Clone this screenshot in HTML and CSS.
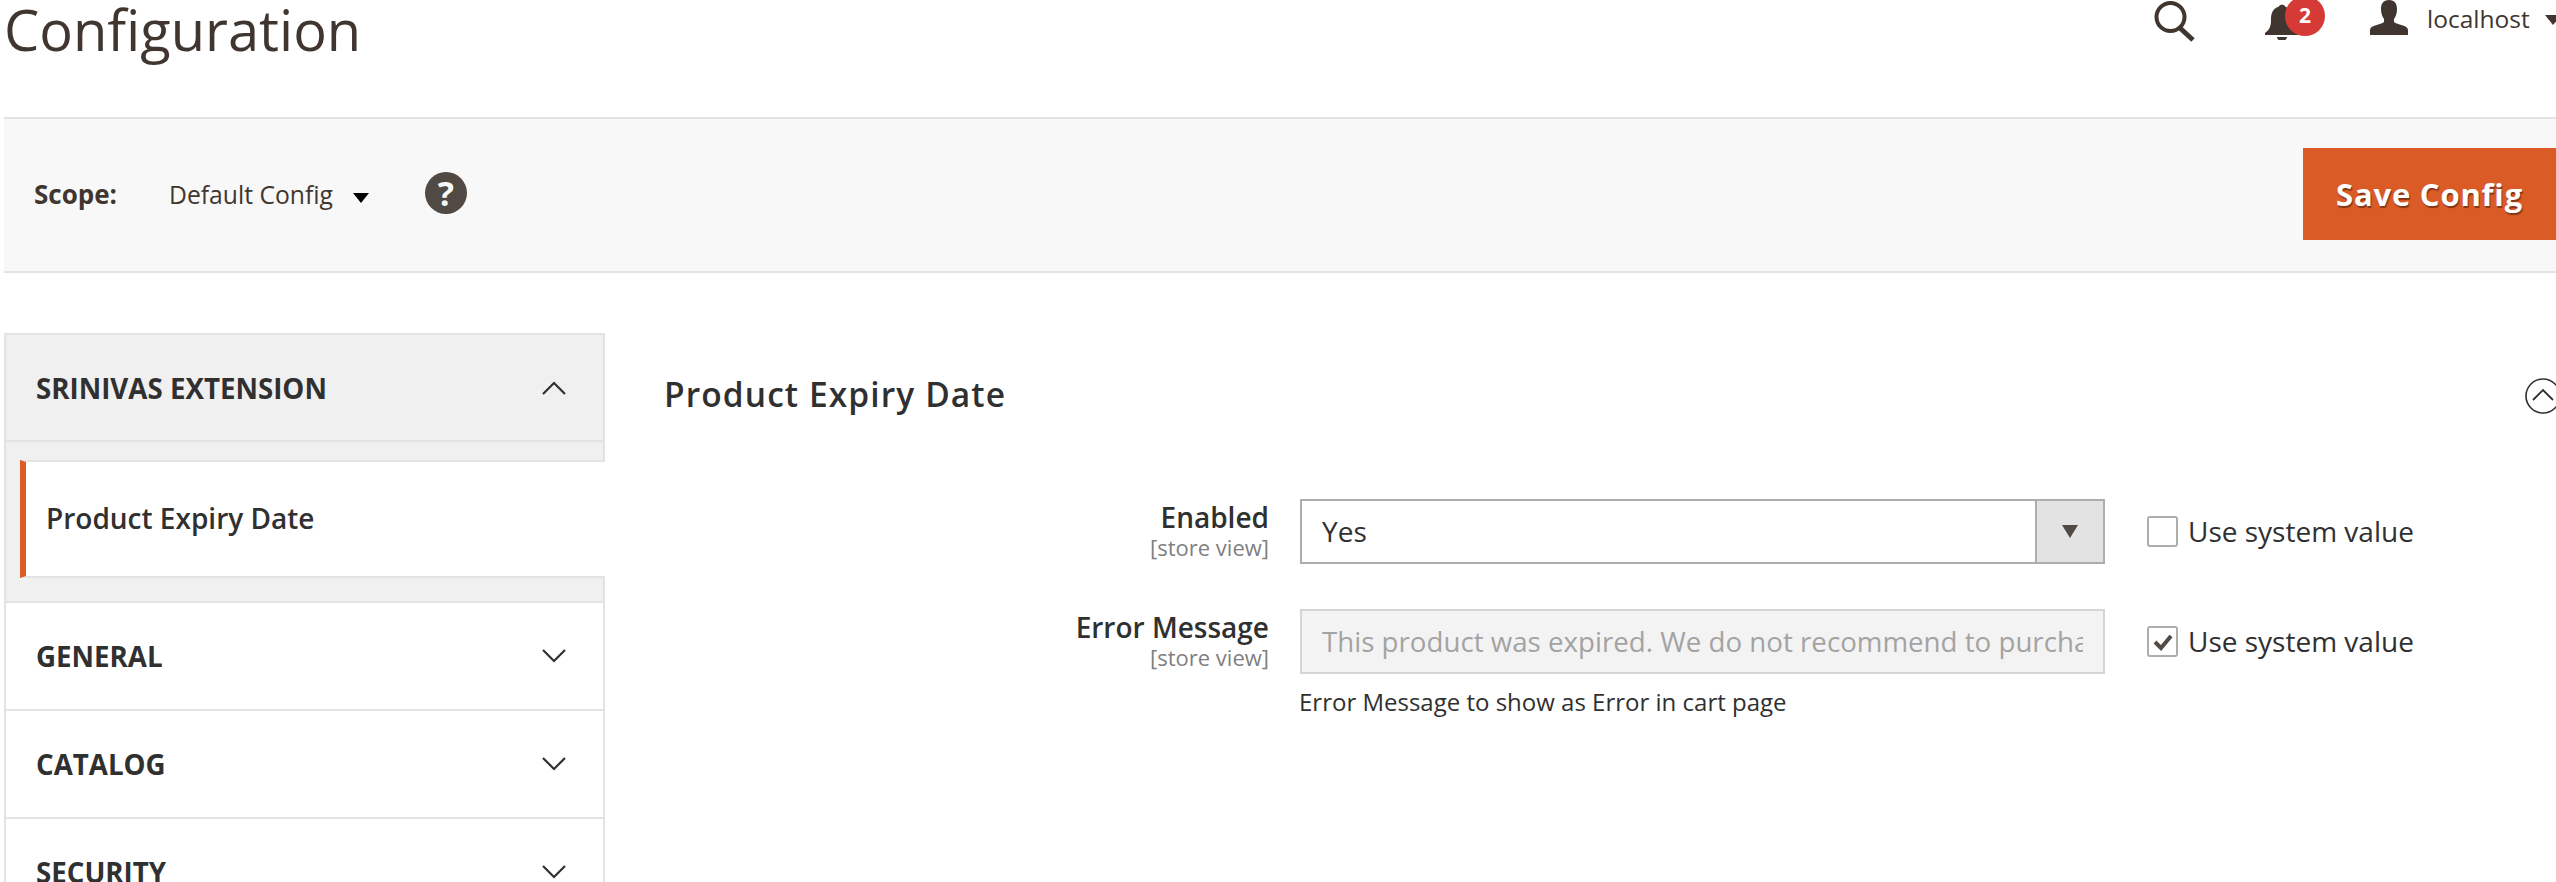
FILE: index.html
```html
<!DOCTYPE html>
<html lang="en">
<head>
<meta charset="utf-8">
<title>Configuration</title>
<link rel="stylesheet" href="styles.css">
</head>
<body>
<header class="page-header">
  <h1 class="page-title">Configuration</h1>
  <div class="actions">
    <svg class="icon-search" viewBox="0 0 42 42"><circle cx="17.5" cy="17" r="14" fill="none" stroke="#41362f" stroke-width="4"/><path d="M27 28 L40 40" fill="none" stroke="#41362f" stroke-width="5"/></svg>
    <div class="notify">
      <svg class="icon-bell" viewBox="0 0 36 36"><path fill="#41362f" d="M15 2.5 C15 0 21 0 21 2.5 C28 5 29 10 29 16 C29 23 31 26 35 29 L35 31 L1 31 L1 29 C5 26 7 23 7 16 C7 10 8 5 15 2.5 Z M13 33 L23 33 C23 38 13 38 13 33 Z"/></svg>
      <span class="badge">2</span>
    </div>
    <svg class="icon-user" viewBox="0 0 38 35"><path fill="#41362f" d="M19 0 C25 0 27 4 27 9 C27 13 26 16 24 19 L24 22 C27 25 38 25 38 30 L38 35 L0 35 L0 30 C0 25 11 25 14 22 L14 19 C12 16 11 13 11 9 C11 4 13 0 19 0 Z"/></svg>
    <span class="user-name">localhost</span>
    <span class="user-caret"></span>
  </div>
</header>

<section class="scope-bar">
  <span class="scope-label">Scope:</span>
  <span class="scope-value">Default Config</span>
  <span class="scope-caret"></span>
  <span class="help">?</span>
  <button class="save">Save Config</button>
</section>

<main class="layout">
  <nav class="sidebar">
    <div class="nav-head open">
      <span>SRINIVAS EXTENSION</span>
      <svg class="chev" viewBox="0 0 24 14"><path d="M1 13 L12 2 L23 13" fill="none" stroke="#303030" stroke-width="2.2"/></svg>
    </div>
    <div class="nav-sub">
      <div class="nav-item">Product Expiry Date</div>
    </div>
    <div class="nav-head">
      <span>GENERAL</span>
      <svg class="chev" viewBox="0 0 24 14"><path d="M1 1 L12 12 L23 1" fill="none" stroke="#303030" stroke-width="2.2"/></svg>
    </div>
    <div class="nav-head">
      <span>CATALOG</span>
      <svg class="chev" viewBox="0 0 24 14"><path d="M1 1 L12 12 L23 1" fill="none" stroke="#303030" stroke-width="2.2"/></svg>
    </div>
    <div class="nav-head">
      <span>SECURITY</span>
      <svg class="chev" viewBox="0 0 24 14"><path d="M1 1 L12 12 L23 1" fill="none" stroke="#303030" stroke-width="2.2"/></svg>
    </div>
  </nav>

  <div class="content">
    <div class="section-head">
      <h2 class="section-title">Product Expiry Date</h2>
      <svg class="collapse" viewBox="0 0 36 36"><circle cx="18" cy="18" r="17" fill="none" stroke="#303030" stroke-width="1.6"/><path d="M8 22 L18 12 L28 22" fill="none" stroke="#303030" stroke-width="1.8"/></svg>
    </div>
    <div class="form">
      <div class="label"><div class="label-main">Enabled</div><div class="label-scope">[store view]</div></div>
      <div class="control">
        <div class="select"><span class="select-text">Yes</span><span class="select-btn"><i class="select-arrow"></i></span></div>
      </div>
      <label class="system"><span class="check"></span><span class="system-text">Use system value</span></label>

      <div class="label"><div class="label-main">Error Message</div><div class="label-scope">[store view]</div></div>
      <div class="control">
        <div class="input"><span class="input-text">This product was expired. We do not recommend to purchase</span></div>
        <div class="note">Error Message to show as Error in cart page</div>
      </div>
      <label class="system"><span class="check"><svg viewBox="0 0 20 18"><path d="M2 9 L8 15 L18 3" fill="none" stroke="#514943" stroke-width="4"/></svg></span><span class="system-text">Use system value</span></label>
    </div>
  </div>
</main>
</body>
</html>
```

FILE: styles.css
```css
html, body {
  margin: 0;
  height: 882px;
  overflow: hidden;
  background: #fff;
}
body {
  font-family: "Open Sans", sans-serif;
  color: #303030;
}
.page-header {
  height: 117px;
  display: flex;
  justify-content: space-between;
  align-items: flex-start;
  box-sizing: border-box;
}
.page-title {
  margin: 0 0 0 4px;
  font-size: 56px;
  font-weight: 400;
  line-height: 59px;
  color: #41362f;
}
.actions {
  display: flex;
  align-items: flex-start;
  overflow: hidden;
  height: 60px;
  width: 403px;
  flex: none;
}
.icon-search {
  width: 42px;
  height: 42px;
  flex: none;
}
.notify {
  position: relative;
  width: 36px;
  height: 40px;
  margin-left: 69px;
  flex: none;
}
.icon-bell {
  width: 36px;
  height: 36px;
  margin-top: 4px;
  display: block;
}
.badge {
  position: absolute;
  left: 21px;
  top: -4px;
  width: 40px;
  height: 40px;
  border-radius: 50%;
  background: #d63a36;
  color: #fff;
  font-size: 21px;
  font-weight: 700;
  line-height: 38px;
  text-align: center;
}
.icon-user {
  width: 38px;
  height: 35px;
  margin-left: 70px;
  flex: none;
}
.user-name {
  margin-left: 19px;
  font-size: 24.5px;
  line-height: 38px;
  color: #41362f;
}
.user-caret, .scope-caret {
  width: 0;
  height: 0;
  border-style: solid;
  border-color: #000 transparent transparent;
  flex: none;
}
.user-caret {
  border-width: 10px 8px 0;
  border-top-color: #41362f;
  margin: 15px 0 0 15px;
}
.scope-bar {
  margin-left: 4px;
  height: 156px;
  box-sizing: border-box;
  border-top: 2px solid #e3e3e3;
  border-bottom: 2px solid #e3e3e3;
  background: #f8f8f8;
  display: flex;
  align-items: center;
}
.scope-label {
  margin-left: 30px;
  padding-bottom: 2px;
  font-size: 26px;
  font-weight: 700;
  color: #41362f;
}
.scope-value {
  margin-left: 52px;
  padding-bottom: 2px;
  font-size: 24.7px;
  color: #41362f;
}
.scope-caret {
  border-width: 10px 8px 0;
  margin: 6px 0 0 20px;
}
.help {
  margin-left: 56px;
  margin-top: -4px;
  width: 42px;
  height: 42px;
  border-radius: 50%;
  background: #514943;
  color: #f8f8f8;
  font-size: 34px;
  font-weight: 700;
  line-height: 42px;
  text-align: center;
}
.save {
  margin-left: auto;
  margin-top: -2px;
  width: 253px;
  height: 92px;
  border: 0;
  background: #db5b27;
  color: #fff;
  font-family: inherit;
  font-size: 31px;
  font-weight: 700;
  letter-spacing: 0.8px;
  text-shadow: 1px 2px 1px rgba(0,0,0,.4);
}
.layout {
  display: flex;
  padding: 60px 0 0 4px;
}
.sidebar {
  width: 601px;
  flex: none;
}
.nav-head {
  display: flex;
  justify-content: space-between;
  align-items: center;
  box-sizing: border-box;
  height: 108px;
  padding: 0 37px 0 30px;
  border: 2px solid #e3e3e3;
  border-top: 0;
  font-size: 27.7px;
  font-weight: 700;
  color: #303030;
}
.nav-head.open {
  height: 109px;
  border-top: 2px solid #e3e3e3;
  background: #f0f0f0;
}
.chev {
  width: 24px;
  height: 14px;
  flex: none;
}
.nav-sub {
  box-sizing: border-box;
  height: 161px;
  padding: 18px 0 0 14px;
  background: #f0f0f0;
  border: 2px solid #e3e3e3;
  border-top: 0;
}
.nav-item {
  box-sizing: border-box;
  height: 118px;
  margin-right: -2px;
  background: #fff;
  border-left: 6px solid #db5b27;
  border-top: 2px solid #e3e3e3;
  border-bottom: 2px solid #e3e3e3;
  padding-left: 20px;
  font-size: 28px;
  font-weight: 600;
  line-height: 112px;
}
.content {
  flex: 1;
  margin-left: 59px;
  min-width: 0;
}
.section-head {
  display: flex;
  justify-content: space-between;
  align-items: center;
  height: 125px;
  margin-bottom: 41px;
}
.section-title {
  margin: 0 0 3px;
  font-size: 33.5px;
  font-weight: 600;
  letter-spacing: 1.1px;
  color: #303030;
}
.collapse {
  width: 36px;
  height: 36px;
  margin-right: -5px;
  flex: none;
}
.form {
  display: grid;
  grid-template-columns: 605px 805px auto;
  column-gap: 31px;
  row-gap: 45px;
  align-items: start;
}
.label {
  text-align: right;
  padding-top: 1px;
}
.label-main {
  font-size: 28px;
  font-weight: 600;
  line-height: 35px;
}
.label-scope {
  font-size: 22px;
  line-height: 24px;
  color: #808080;
}
.select, .input {
  box-sizing: border-box;
  height: 65px;
  border: 2px solid #adadad;
  display: flex;
  align-items: center;
  font-size: 28px;
}
.select-text {
  flex: 1;
  padding: 0 0 2px 20px;
}
.select-btn {
  width: 68px;
  height: 100%;
  border-left: 2px solid #adadad;
  background: #e3e3e3;
  display: flex;
  align-items: center;
  justify-content: center;
  box-sizing: border-box;
}
.select-arrow {
  width: 0;
  height: 0;
  border-style: solid;
  border-width: 13px 8px 0;
  border-color: #514943 transparent transparent;
}
.input {
  border-color: #d5d5d5;
  background: #f3f3f3;
  padding: 0 20px;
  font-size: 27.7px;
  color: #a3a3a3;
}
.input-text {
  white-space: nowrap;
  overflow: hidden;
  width: 100%;
  padding-bottom: 1px;
}
.note {
  margin-top: 12px;
  font-size: 24px;
  line-height: 31px;
  margin-left: -1px;
}
.system {
  display: flex;
  align-items: center;
  height: 65px;
  margin-left: 11px;
  font-size: 28px;
}
.system-text {
  padding-bottom: 2px;
}
.check {
  box-sizing: border-box;
  width: 31px;
  height: 31px;
  margin-right: 10px;
  border: 2px solid #adadad;
  border-radius: 3px;
  background: #fff;
  display: flex;
  align-items: center;
  justify-content: center;
}
.check svg {
  width: 20px;
  height: 18px;
}
```
